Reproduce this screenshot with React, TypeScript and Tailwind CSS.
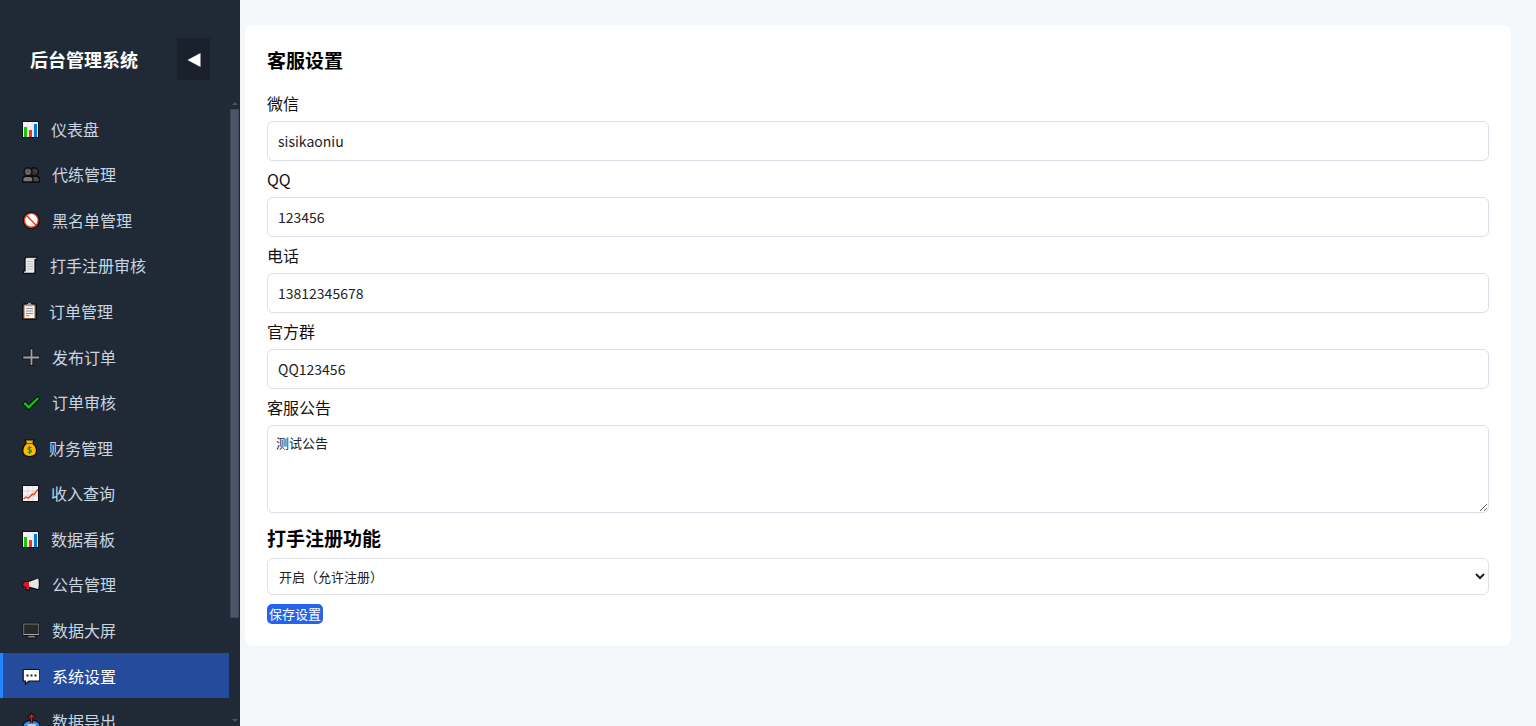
import { useState } from "react";
import type { ReactNode } from "react";

// menu item type
interface IMenuItem {
  name: string;
  icon: ReactNode;
}

const ChartIcon = () => (
  <svg viewBox="0 0 17 18" className="w-[17px] h-[18px] shrink-0">
    <rect x="0" y="1" width="17" height="17" rx="1" fill="#0d1117" />
    <rect x="1" y="2" width="15" height="15" fill="#f4f4f4" />
    <path d="M1 7h15M1 12h15M6 2v15M11 2v15" stroke="#dcdcdc" strokeWidth="0.6" />
    <rect x="2" y="7" width="3" height="10" fill="#16c60c" />
    <rect x="7" y="10" width="3" height="7" fill="#f03a17" />
    <rect x="12" y="4" width="3" height="13" fill="#0078d7" />
  </svg>
);

const UsersIcon = () => (
  <svg viewBox="0 0 18 18" className="w-[18px] h-[18px] shrink-0">
    <g stroke="#0a0d12" strokeWidth="1.400">
      <path d="M8 17v-2.500c0-2 1.500-3.300 3.500-3.300H14c2 0 3.500 1.300 3.500 3.300V17z" fill="#4a4a4a" />
      <circle cx="12.300" cy="6.800" r="4" fill="#343434" />
      <path d="M.7 17v-2.500c0-2 1.500-3.300 3.500-3.300h3.500c2 0 3.300 1.300 3.300 3.300V17z" fill="#767676" />
      <circle cx="6" cy="6.800" r="4" fill="#565656" />
    </g>
    <path d="M4 6h1M7 6h1M4.600 8.500q1.400.8 2.800 0M11.500 6h.8M14 6h.8" stroke="#929292" strokeWidth="0.9" fill="none" />
  </svg>
);

const BanIcon = () => (
  <svg viewBox="0 0 18 18" className="w-[18px] h-[18px] shrink-0">
    <circle cx="9.300" cy="9.300" r="8.700" fill="#0d1117" />
    <circle cx="9.300" cy="9.300" r="6.900" fill="#fff" stroke="#f03a17" strokeWidth="1.400" />
    <path d="M4.500 4.500l9.700 9.700" stroke="#f03a17" strokeWidth="1.500" />
  </svg>
);

const ScrollIcon = () => (
  <svg viewBox="0 0 16 18" className="w-4 h-[18px] shrink-0">
    <path
      d="M4 1.200h10.500c.8 0 1 1.800 0 2.300h-1.500v12.200c0 1.200-.6 1.700-1.500 1.700H2.500C1 17.400 1 15.200 2 14.900h1V3z"
      fill="#ececec"
      stroke="#0a0d12"
      strokeWidth="1.300"
    />
    <path d="M5 5.500h6M5 8h6M5 10.500h6M5 13h6" stroke="#b5b5b5" strokeWidth="0.9" />
    <path d="M5 3h8" stroke="#cfcfcf" strokeWidth="0.7" />
  </svg>
);

const ClipboardIcon = () => (
  <svg viewBox="0 0 15 18" className="w-[15px] h-[18px] shrink-0">
    <rect x="0.700" y="1.800" width="13.600" height="15.600" rx="1" fill="#9a5c35" stroke="#0a0d12" strokeWidth="1.300" />
    <rect x="2.500" y="3.500" width="10" height="12.500" fill="#f2f2f2" />
    <path d="M4.500 2.200h1.500V1h3v1.200h1.500v2h-6z" fill="#9b9b9b" />
    <path d="M4 6.500h7M4 9h7M4 11.500h7M4 13.700h3.500" stroke="#848484" strokeWidth="0.9" />
  </svg>
);

const PlusIcon = () => (
  <svg viewBox="0 0 18 18" className="w-[18px] h-[18px] shrink-0">
    <path d="M9.500 0v18M0 9.500h18" stroke="#0d1117" strokeWidth="3.600" />
    <path d="M9.500 1.200v15.800M1.200 9.500h16" stroke="#a3a3a3" strokeWidth="1.800" />
  </svg>
);

const CheckIcon = () => (
  <svg viewBox="0 0 18 18" className="w-[18px] h-[18px] shrink-0">
    <path d="M1.500 9.300L6.700 14.500 17 4.300" fill="none" stroke="#0d1117" strokeWidth="4.500" />
    <path d="M2.200 9.900l4.500 4.400L16.200 5" fill="none" stroke="#16c60c" strokeWidth="2.300" />
  </svg>
);

const MoneyIcon = () => (
  <svg viewBox="0 0 15 18" className="w-[15px] h-[18px] shrink-0">
    <path
      d="M3 1h9l-1.300 3.500c2.300 1.500 3.800 4.300 3.800 7.500 0 3.500-2.500 5.500-7 5.500S.8 15.500.8 12c0-3.200 1.500-6 3.600-7.500z"
      fill="#ffb900"
      stroke="#0a0d12"
      strokeWidth="1.200"
    />
    <path d="M4.200 4.500h6.800" stroke="#8e562e" strokeWidth="1.300" />
    <path
      d="M9.500 9c-.5-.9-3.600-1.200-3.600.5 0 1.800 3.600.9 3.600 2.800 0 1.700-3.200 1.500-3.800.4M7.600 7v8"
      fill="none"
      stroke="#10893e"
      strokeWidth="1.100"
    />
  </svg>
);

const TrendIcon = () => (
  <svg viewBox="0 0 17 18" className="w-[17px] h-[18px] shrink-0">
    <rect x="0" y="1" width="17" height="17" rx="1" fill="#0d1117" />
    <rect x="1" y="2" width="15" height="15" fill="#f4f4f4" />
    <path d="M1 7h15M1 12h15M6 2v15M11 2v15" stroke="#cfcfcf" strokeWidth="0.7" />
    <path d="M1.500 15l2.500-2 2.500 1.300 3.500-4 2 .2 3.800-5" fill="none" stroke="#f03a17" strokeWidth="1.300" />
  </svg>
);

const MegaphoneIcon = () => (
  <svg viewBox="0 0 18 18" className="w-[18px] h-[18px] shrink-0">
    <path
      d="M1.500 7l5.500-.5 9-3c1.500 0 1.500 11 0 11l-8.300-2.300V14c0 1.500-3.200 1.500-3.200 0v-2l-3-.2c-1-.5-1-4.300 0-4.800z"
      fill="#0d1117"
      stroke="#0d1117"
      strokeWidth="1.600"
    />
    <path d="M7 7l9-3.500c1 0 1 10.500 0 10.500l-9-2.500z" fill="#e6e6e6" />
    <path d="M1.800 7.300L7 7v4.700l-5.200-.2c-.8-.5-.8-3.700 0-4.200zM4.500 11.500h2.700v2.300c0 1-2.700 1-2.700 0z" fill="#e81224" />
  </svg>
);

const ScreenIcon = () => (
  <svg viewBox="0 0 18 18" className="w-[18px] h-[18px] shrink-0">
    <path d="M6.500 13h6v2H14v2H5v-2h1.500z" fill="#848484" stroke="#0a0d12" strokeWidth="1" />
    <rect x="0.500" y="1.700" width="17.500" height="13" rx="1" fill="#0a0d12" />
    <rect x="1.700" y="3" width="15" height="10.500" fill="#292929" stroke="#767676" strokeWidth="1" />
    <path d="M1.500 13.500h15.500" stroke="#a8a8a8" strokeWidth="1" />
  </svg>
);

const ChatIcon = () => (
  <svg viewBox="0 0 18 18" className="w-[18px] h-[18px] shrink-0">
    <path
      d="M2 2.500h15c.5 0 .8.300.8.800v9.900c0 .5-.3.800-.8.800H6.800L3.500 17.200V14H2c-.5 0-.8-.3-.8-.8V3.300c0-.5.3-.8.8-.8z"
      fill="#fff"
      stroke="#0a0d12"
      strokeWidth="1.200"
    />
    <path d="M4.500 8.500h2M8.500 8.500h2M12.500 8.500h2" stroke="#222" strokeWidth="1.900" />
  </svg>
);

const ExportIcon = () => (
  <svg viewBox="0 0 18 18" className="w-[18px] h-[18px] shrink-0">
    <ellipse cx="9.500" cy="13" rx="8.300" ry="4.700" fill="#2b8fe0" stroke="#0a0d12" strokeWidth="1.200" />
    <path d="M5 12h9l-1 3H6z" fill="#a6d3f5" />
    <path d="M9.500 11V2M6.300 6l3.200-3.500L12.700 6" fill="none" stroke="#0d1117" strokeWidth="3" />
    <path d="M9.500 11V3M7 5.700l2.500-2.700L12 5.700" fill="none" stroke="#e81224" strokeWidth="1.300" />
  </svg>
);

const menuItems: IMenuItem[] = [
  { name: "仪表盘", icon: <ChartIcon /> },
  { name: "代练管理", icon: <UsersIcon /> },
  { name: "黑名单管理", icon: <BanIcon /> },
  { name: "打手注册审核", icon: <ScrollIcon /> },
  { name: "订单管理", icon: <ClipboardIcon /> },
  { name: "发布订单", icon: <PlusIcon /> },
  { name: "订单审核", icon: <CheckIcon /> },
  { name: "财务管理", icon: <MoneyIcon /> },
  { name: "收入查询", icon: <TrendIcon /> },
  { name: "数据看板", icon: <ChartIcon /> },
  { name: "公告管理", icon: <MegaphoneIcon /> },
  { name: "数据大屏", icon: <ScreenIcon /> },
  { name: "系统设置", icon: <ChatIcon /> },
  { name: "数据导出", icon: <ExportIcon /> },
];

// single line contact fields
const contactFields = [
  { id: "wechat", label: "微信", value: "sisikaoniu" },
  { id: "qq", label: "QQ", value: "123456" },
  { id: "phone", label: "电话", value: "13812345678" },
  { id: "group", label: "官方群", value: "QQ123456" },
];

function Sidebar() {
  const [active, setActive] = useState("系统设置");

  return (
    <aside className="flex h-full w-60 shrink-0 flex-col bg-[#202a37]">
      <div className="flex shrink-0 items-center justify-between px-[30px] pt-[38px] pb-[18px]">
        <h2 className="text-lg font-bold text-white">后台管理系统</h2>
        <button
          type="button"
          aria-label="收起菜单"
          className="flex h-[42px] w-[33px] items-center justify-center bg-[#1a202c] pt-0.5"
        >
          <svg viewBox="0 0 14 16" className="h-4 w-3.5">
            <path d="M13.500 1v14L.5 8z" fill="#fff" />
          </svg>
        </button>
      </div>
      <div className="flex min-h-0 flex-1">
        <nav className="flex-1 overflow-y-auto pt-2 [scrollbar-width:none]">
          <ul className="grid h-[638px] auto-rows-fr">
            {menuItems.map(({ name, icon }) => (
              <li key={name} className="flex">
                <a
                  href="#"
                  onClick={() => setActive(name)}
                  className={
                    active === name
                      ? "flex flex-1 items-center gap-3 border-l-3 border-[#2684ff] bg-[#254b9d] pl-[19px] text-white"
                      : "flex flex-1 items-center gap-3 border-l-3 border-transparent pl-[19px] text-[#cbd5e0]"
                  }
                >
                  {icon}
                  {name}
                </a>
              </li>
            ))}
          </ul>
        </nav>
        {/* scrollbar */}
        <div className="flex w-[11px] flex-col items-center justify-between pt-1 pb-1">
          <svg viewBox="0 0 6 3" className="h-[3px] w-1.5 shrink-0">
            <path d="M0 3l3-3 3 3z" fill="#4a5568" />
          </svg>
          <div className="my-1 min-h-0 w-full flex-1 px-px">
            <div className="h-[84%] border border-[#3c4859] bg-[#4a5568]" />
          </div>
          <svg viewBox="0 0 6 3" className="h-[3px] w-1.5 shrink-0">
            <path d="M0 0l3 3 3-3z" fill="#4a5568" />
          </svg>
        </div>
      </div>
    </aside>
  );
}

export default function App() {
  return (
    <div className="flex h-screen overflow-hidden bg-[#f3f7fa] font-['Noto_Sans_CJK_SC',sans-serif] text-base text-[#111]">
      <Sidebar />
      <main className="min-w-0 flex-1 overflow-y-auto py-[25px] pr-[25px] pl-[5px]">
        <form className="flex flex-col items-stretch rounded-lg bg-white px-[22px] pt-[21px] pb-[22px]">
          <h3 className="mb-[17px] text-[19px] leading-7 font-bold text-black">客服设置</h3>
          {contactFields.map(({ id, label, value }) => (
            <div key={id} className="mb-1.5 flex flex-col gap-1.5">
              <label htmlFor={id}>{label}</label>
              <input
                id={id}
                type="text"
                defaultValue={value}
                className="h-10 rounded-md border border-[#d9dfe8] px-2.5 text-sm text-[#222]"
              />
            </div>
          ))}
          <div className="flex flex-col gap-1.5">
            <label htmlFor="notice">客服公告</label>
            <textarea
              id="notice"
              defaultValue="测试公告"
              className="h-[88px] resize rounded-md border border-[#d9dfe8] px-2 py-[7px] text-[13px] leading-5 text-[#222]"
            />
          </div>
          <h3 className="mt-[11px] mb-1.5 text-[19px] leading-7 font-bold text-black">
            <label htmlFor="register">打手注册功能</label>
          </h3>
          <select
            id="register"
            className="h-[37px] rounded-md border border-[#dfe1e4] bg-white px-[7px] text-[13px] text-[#222]"
          >
            <option>开启（允许注册）</option>
            <option>关闭（禁止注册）</option>
          </select>
          <button
            type="button"
            className="mt-[9px] h-5 self-start rounded-[5px] bg-[#2563eb] px-0.5 text-[13px] leading-5 text-white"
          >
            保存设置
          </button>
        </form>
      </main>
    </div>
  );
}
